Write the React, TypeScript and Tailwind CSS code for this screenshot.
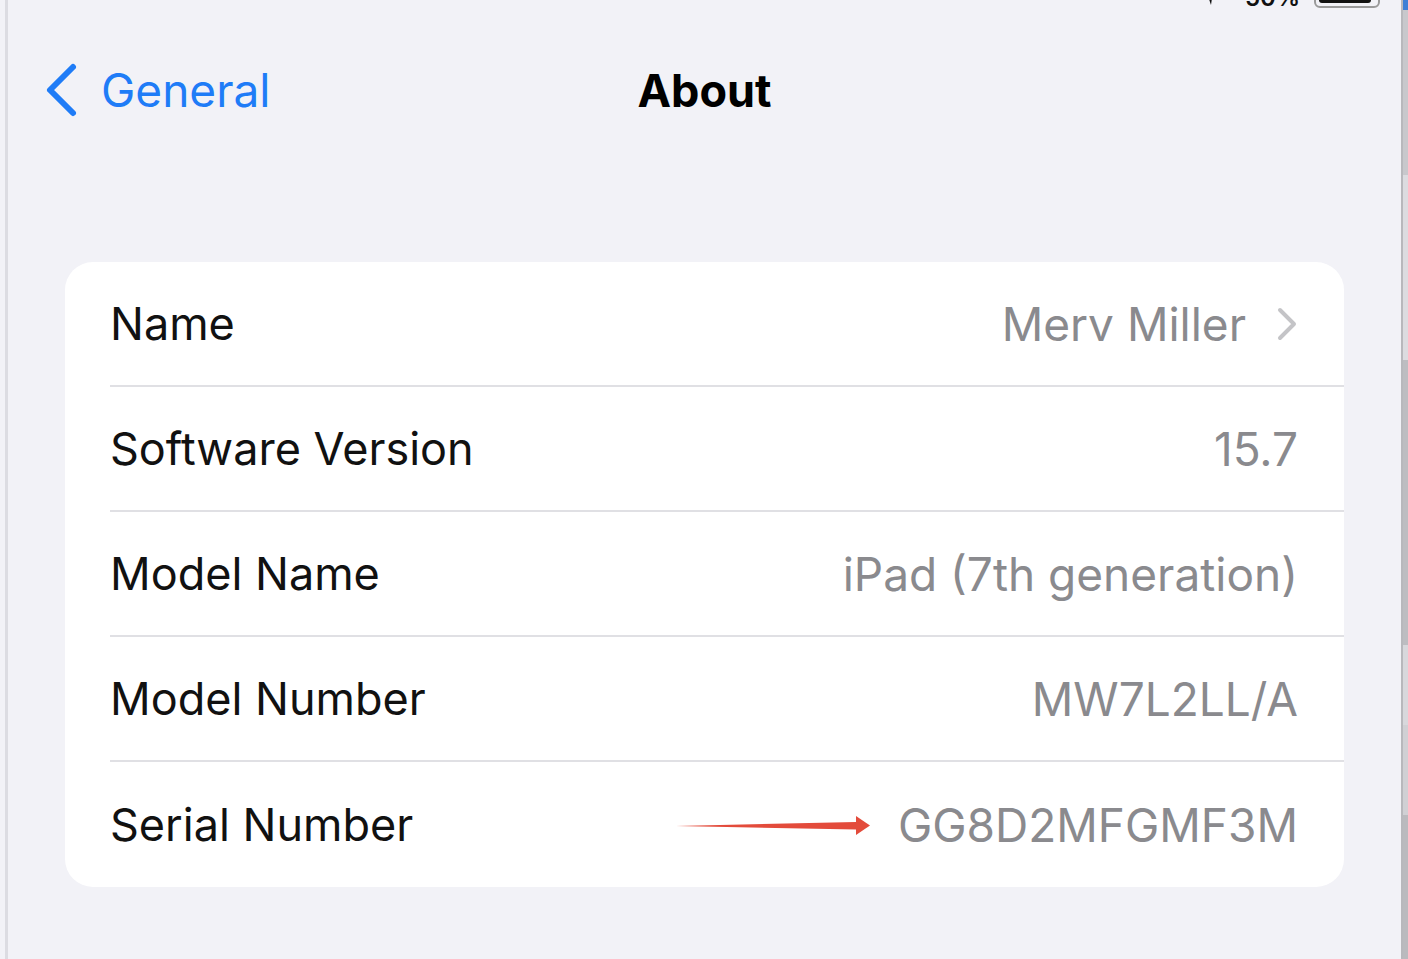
import React from "react";

const rows = [
  { label: "Name", value: "Merv Miller", chevron: true },
  { label: "Software Version", value: "15.7" },
  { label: "Model Name", value: "iPad (7th generation)" },
  { label: "Model Number", value: "MW7L2LL/A" },
  { label: "Serial Number", value: "GG8D2MFGMF3M", arrow: true },
];

const font = { fontFamily: "Inter, 'Noto Sans', sans-serif" };

const App = () => {
  return (
    <div
      className="relative flex h-[959px] w-[1408px] overflow-hidden bg-[#f2f2f7]"
      style={font}
    >
      {/* left edge of the window */}
      <div className="w-[5px] bg-[#f2f2f7]" />
      <div className="w-[3px] bg-[#dcdce2]" />

      {/* status bar, cut off at the top */}
      <div className="absolute right-[28px] top-[-14px] flex items-center gap-[10px]">
        <svg width="14" height="18" viewBox="0 0 14 18">
          <path d="M1 1 L13 8 L7 9 L6 16 Z" fill="#111" />
        </svg>
        <span className="ml-[16px] text-[24px] font-semibold leading-none text-[#111]">50%</span>
        <div className="ml-[4px] h-[20px] w-[66px] rounded-[6px] border-[2px] border-[#9a9a9a] p-[3px]">
          <div className="h-full w-[52px] rounded-[3px] bg-[#111]" />
        </div>
      </div>

      <div className="flex flex-1 flex-col">
        {/* nav bar */}
        <div className="grid h-[180px] grid-cols-[1fr_auto_1fr] items-center">
          <div className="flex items-center gap-[22px] pb-[1px] pl-[35px]">
            <svg width="36" height="56" viewBox="0 0 36 56">
              <path
                d="M30 5 L7 28 L30 51"
                fill="none"
                stroke="#1f7cf7"
                strokeWidth="6"
                strokeLinecap="round"
                strokeLinejoin="round"
              />
            </svg>
            <span className="text-[46px] leading-none text-[#1f7cf7]">General</span>
          </div>
          <div className="text-[45px] font-bold leading-none text-black">About</div>
          <div />
        </div>

        {/* card */}
        <div className="mx-[57px] mt-[82px] rounded-[28px] bg-white pl-[45px]">
          {rows.map((r, i) => (
            <div
              key={r.label}
              className={
                "flex h-[125px] items-center justify-between pr-[46px] " +
                (i < rows.length - 1 ? "border-b-[2px] border-[#e0e0e4]" : "")
              }
            >
              <span className="text-[45px] leading-none text-[#111]">{r.label}</span>
              <div className="flex items-center">
                {r.arrow && (
                  <svg width="200" height="26" viewBox="0 0 200 26" className="mr-[26px]">
                    <path d="M4 14 L184 10 L184 17.5 Z" fill="#e34b3b" />
                    <path d="M184 4 L198 13.5 L184 23 Z" fill="#e34b3b" />
                  </svg>
                )}
                <span className="text-[46px] leading-none text-[#8a8a8e]">{r.value}</span>
                {r.chevron && (
                  <svg width="22" height="34" viewBox="0 0 22 34" className="ml-[30px]">
                    <path
                      d="M4 3 L18 17 L4 31"
                      fill="none"
                      stroke="#c4c4c7"
                      strokeWidth="4"
                      strokeLinecap="round"
                      strokeLinejoin="round"
                    />
                  </svg>
                )}
              </div>
            </div>
          ))}
        </div>
      </div>

      {/* background window peeking at the right edge */}
      <div className="flex w-[7px] flex-col border-l-[2px] border-[#b8b8bc]">
        <div className="h-[10px] bg-[#3d7fd6]" />
        <div className="h-[165px] bg-[#c8c8cc]" />
        <div className="h-[185px] bg-[#dcdce0]" />
        <div className="h-[285px] bg-[#bdbdc1]" />
        <div className="h-[80px] bg-[#d8d8dc]" />
        <div className="h-[90px] bg-[#d0d0d4]" />
        <div className="h-[144px] bg-[#bababe]" />
      </div>
    </div>
  );
};

export default App;
